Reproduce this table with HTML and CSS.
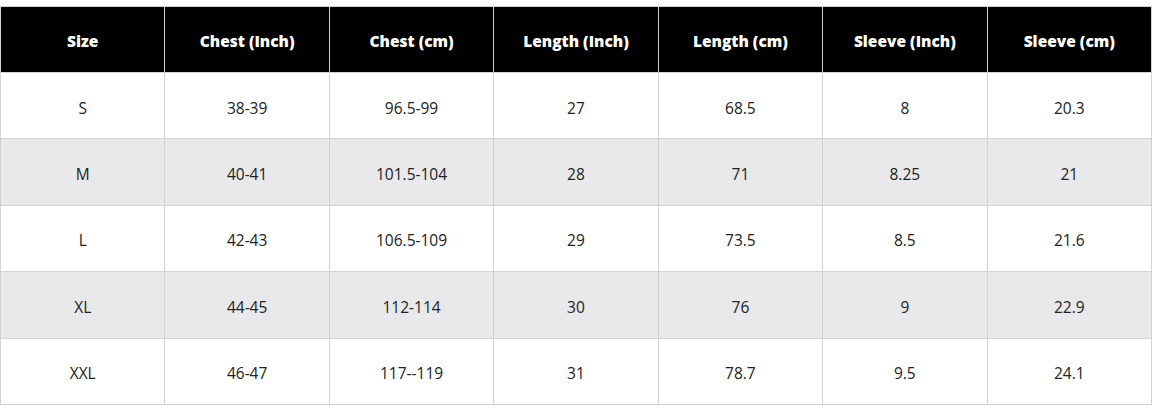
FILE: index.html
```html
<!DOCTYPE html>
<html>
<head>
<meta charset="utf-8">
<link rel="stylesheet" href="styles.css">
</head>
<body>
<div class="wrap">
<table class="size-table">
  <thead>
    <tr><th>Size</th><th>Chest (Inch)</th><th>Chest (cm)</th><th>Length (Inch)</th><th>Length (cm)</th><th>Sleeve (Inch)</th><th>Sleeve (cm)</th></tr>
  </thead>
  <tbody>
    <tr><td>S</td><td>38-39</td><td>96.5-99</td><td>27</td><td>68.5</td><td>8</td><td>20.3</td></tr>
    <tr><td>M</td><td>40-41</td><td>101.5-104</td><td>28</td><td>71</td><td>8.25</td><td>21</td></tr>
    <tr><td>L</td><td>42-43</td><td>106.5-109</td><td>29</td><td>73.5</td><td>8.5</td><td>21.6</td></tr>
    <tr><td>XL</td><td>44-45</td><td>112-114</td><td>30</td><td>76</td><td>9</td><td>22.9</td></tr>
    <tr><td>XXL</td><td>46-47</td><td>117--119</td><td>31</td><td>78.7</td><td>9.5</td><td>24.1</td></tr>
  </tbody>
</table>
</div>
</body>
</html>
```
FILE: styles.css
```css
html, body {
  margin: 0;
  padding: 0;
  background: #ffffff;
}
.wrap {
  padding-top: 6px;
}
.size-table {
  width: 1152px;
  border-collapse: collapse;
  table-layout: fixed;
  font-family: "Open Sans", "Noto Sans", sans-serif;
  font-size: 15.5px;
  color: #222222;
}
.size-table th,
.size-table td {
  border: 1px solid #d2d2d2;
  text-align: center;
  vertical-align: middle;
  padding: 0;
}
.size-table th {
  background: #000000;
  color: #ffffff;
  font-weight: 800;
  padding-top: 3px;
  height: 62px;
}
.size-table td {
  padding-top: 4px;
  height: 61.4px;
}
.size-table tbody tr:nth-child(even) td {
  background: #e9e8ea;
}
```
